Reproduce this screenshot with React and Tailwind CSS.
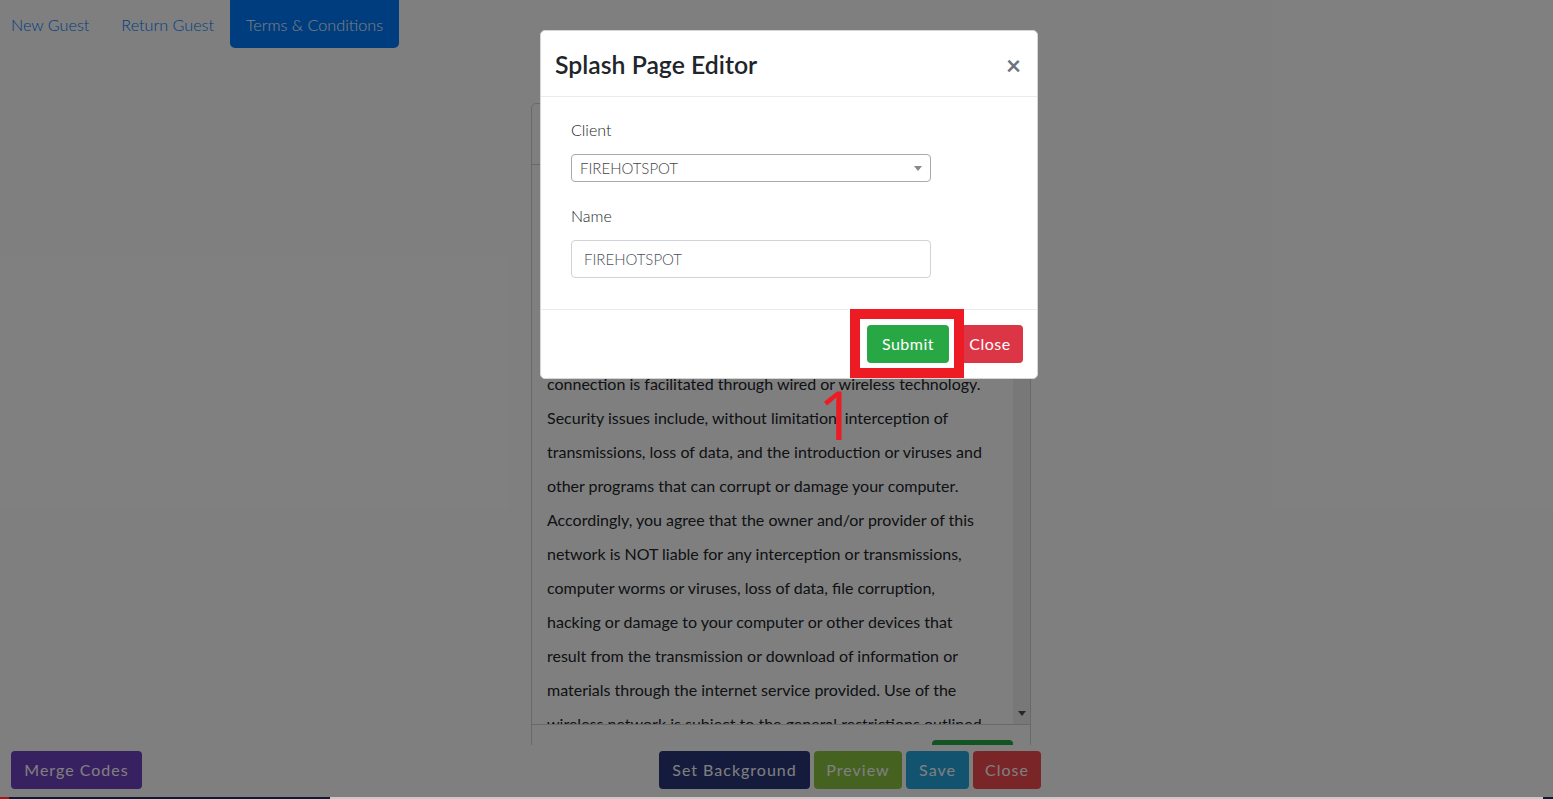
import React from "react";

const termsLines = [
  "Terms & Conditions of Use",
  "By accessing the wireless network, you acknowledge that",
  "you are of legal age, that you have read and understood,",
  "and agree to be bound by this agreement. The service is",
  "provided by the owner and/or provider of this network",
  "and you accept that the network is not secure and that the",
  "connection is facilitated through wired or wireless technology.",
  "Security issues include, without limitation, interception of",
  "transmissions, loss of data, and the introduction or viruses and",
  "other programs that can corrupt or damage your computer.",
  "Accordingly, you agree that the owner and/or provider of this",
  "network is NOT liable for any interception or transmissions,",
  "computer worms or viruses, loss of data, file corruption,",
  "hacking or damage to your computer or other devices that",
  "result from the transmission or download of information or",
  "materials through the internet service provided. Use of the",
  "wireless network is subject to the general restrictions outlined",
  "below. If abnormal, illegal, or unauthorized behavior is detected,",
];

const font = "font-['Lato','Open_Sans',sans-serif]";

function TopNav() {
  return (
    <nav className="flex h-[48px] items-stretch pl-[11px] text-[16.2px] font-light text-[#007bff]">
      <a className="mr-[32px] flex items-center pt-[2px]">New Guest</a>
      <a className="mr-[16px] flex items-center pt-[2px]">Return Guest</a>
      <a className="flex items-center rounded-b-[5px] bg-[#007bff] px-[16px] pt-[2px] text-white">
        Terms &amp; Conditions
      </a>
    </nav>
  );
}

function TermsPanel() {
  return (
    <div className="ml-[531px] mt-[55px] w-[500px] rounded-t-[5px] border border-[#cfd3d7] bg-white">
      <div className="h-[61px] border-b border-[#cfd3d7]" />
      <div className="flex h-[560px] border-b border-[#cfd3d7]">
        <div className="flex-1 overflow-hidden pl-[15px] text-[16px] leading-[34px] text-[#212529]">
          <div className="-mt-[2px]">
            {termsLines.map((l, i) => (
              <div key={i} className="whitespace-nowrap">{l}</div>
            ))}
          </div>
        </div>
        <div className="flex w-[17px] flex-col justify-end bg-[#f1f1f1] pb-[8px]">
          <svg viewBox="0 0 8 5" className="mx-auto h-[5px] w-[8px]">
            <path d="M0 0h8L4 5z" fill="#505050" />
          </svg>
        </div>
      </div>
      <div className="flex justify-end pr-[17px] pt-[15px]">
        <div className="h-[38px] w-[81px] rounded-[4px] bg-[#28a745]" />
      </div>
    </div>
  );
}

function BottomBar() {
  const btn = "flex h-[38px] items-center rounded-[4px] px-[12px] text-[16px] tracking-[1px] text-white";
  return (
    <div className="flex h-[52px] items-start bg-white pl-[11px] pt-[6px]">
      <button className={`${btn} w-[131px] justify-center bg-[#6f42c1]`}>Merge Codes</button>
      <div className="ml-[517px] flex gap-[4px]">
        <button className={`${btn} w-[151px] justify-center bg-[#28377a]`}>Set Background</button>
        <button className={`${btn} w-[88px] justify-center bg-[#8ac442]`}>Preview</button>
        <button className={`${btn} w-[63px] justify-center bg-[#25a9df]`}>Save</button>
        <button className={`${btn} w-[68px] justify-center bg-[#f44a4f]`}>Close</button>
      </div>
    </div>
  );
}

function EditorModal() {
  return (
    <div className="absolute left-[540px] top-[30px] w-[498px] rounded-[5px] border border-[#d5d5d5] bg-white text-[#212529]">
      <div className="flex h-[66px] items-center justify-between border-b border-[#e9ecef] pl-[14px] pr-[16px] pt-[3px]">
        <h4 className="text-[24.8px] font-semibold leading-none">Splash Page Editor</h4>
        <span className="text-[26px] font-bold leading-none text-[#6c757d]">×</span>
      </div>
      <div className="px-[30px] pb-[31px] pt-[21px]">
        <label className="block h-[24px] text-[16px] font-light leading-[24px]">Client</label>
        <div className="mt-[12px] flex h-[28px] w-[360px] items-center justify-between rounded-[4px] border border-[#aaa] pl-[8px] pr-[8px] text-[15px] font-light text-[#444]">
          <span>FIREHOTSPOT</span>
          <svg viewBox="0 0 8 5" className="h-[5px] w-[8px]">
            <path d="M0 0h8L4 5z" fill="#888" />
          </svg>
        </div>
        <label className="mt-[22px] block h-[24px] text-[16px] font-light leading-[24px]">Name</label>
        <div className="mt-[12px] flex h-[38px] w-[360px] items-center rounded-[4px] border border-[#ced4da] px-[12px] text-[15px] font-light text-[#495057]">
          FIREHOTSPOT
        </div>
      </div>
      <div className="flex h-[69px] items-start justify-end gap-[8px] border-t border-[#e9ecef] pr-[14px] pt-[15px]">
        <button className="flex h-[38px] w-[82px] items-center justify-center rounded-[4px] bg-[#28a745] text-[16px] tracking-[0.5px] text-white">
          Submit
        </button>
        <button className="flex h-[38px] w-[66px] items-center justify-center rounded-[4px] bg-[#dc3545] text-[16px] tracking-[0.5px] text-white">
          Close
        </button>
      </div>
    </div>
  );
}

export default function App() {
  return (
    <div className={`relative h-[799px] w-full overflow-hidden bg-white ${font}`}>
      <div className="flex h-[797px] flex-col">
        <main className="h-[745px] overflow-hidden">
          <TopNav />
          <TermsPanel />
        </main>
        <BottomBar />
      </div>
      <div className="flex h-[2px]">
        <div className="w-[9px] bg-[#a01818]" />
        <div className="w-[321px] bg-[#0b1b33]" />
        <div className="flex-1 bg-[#c9c9c9]" />
        <div className="w-[10px] bg-[#0b1b33]" />
      </div>

      {/* modal backdrop */}
      <div className="absolute inset-x-0 top-0 h-[797px] bg-black/50" />
      <EditorModal />

      {/* step marker around the submit button */}
      <div className="absolute left-[850px] top-[309px] h-[69px] w-[114px] border-[10px] border-[#ed1c24]" />
      <span className="absolute left-[818px] top-[381px] font-['Open_Sans',sans-serif] text-[67px] font-normal leading-none text-[#ed1c24]">
        1
      </span>
    </div>
  );
}
